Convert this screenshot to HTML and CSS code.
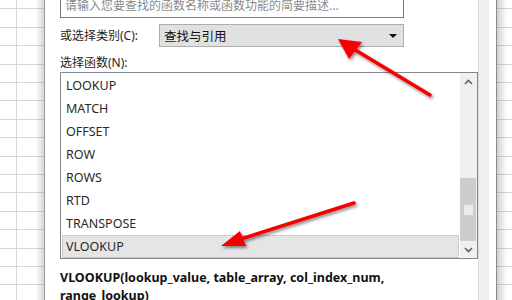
FILE: index.html
```html
<!DOCTYPE html>
<html lang="zh-CN">
<head>
  <meta charset="UTF-8" />
  <title>插入函数</title>
  <link rel="stylesheet" href="styles.css">
</head>
<body>
  <div class="screen">
    <div class="sheet sheet-left"></div>

    <div class="dialog">
      <div class="content">
        <div class="search">请输入您要查找的函数名称或函数功能的简要描述...</div>

        <div class="cat-row">
          <label>或选择类别(C):</label>
          <div class="select">
            <span>查找与引用</span>
            <span class="caret"></span>
          </div>
        </div>

        <div class="list-label">选择函数(N):</div>

        <div class="listbox">
          <ul class="items">
            <li>LOOKUP</li>
            <li>MATCH</li>
            <li>OFFSET</li>
            <li>ROW</li>
            <li>ROWS</li>
            <li>RTD</li>
            <li>TRANSPOSE</li>
            <li class="selected">VLOOKUP</li>
          </ul>
          <div class="scrollbar">
            <div class="sb-btn">
              <svg width="9" height="6" viewBox="0 0 9 6"><path d="M1 5 L4.5 1.5 L8 5" fill="none" stroke="#606060" stroke-width="1.6"/></svg>
            </div>
            <div class="sb-track">
              <div class="sb-thumb"><span class="grip"></span></div>
            </div>
            <div class="sb-btn">
              <svg width="9" height="6" viewBox="0 0 9 6"><path d="M1 1 L4.5 4.5 L8 1" fill="none" stroke="#606060" stroke-width="1.6"/></svg>
            </div>
          </div>
        </div>

        <p class="syntax">VLOOKUP(lookup_value, table_array, col_index_num,<br>range_lookup)</p>
      </div>
      <div class="frame"></div>
    </div>

    <div class="sheet sheet-right"></div>

    <svg class="arrows" width="512" height="300" viewBox="0 0 512 300">
      <defs>
        <filter id="shade" x="-20%" y="-20%" width="140%" height="140%">
          <feDropShadow dx="1.5" dy="2" stdDeviation="1.6" flood-color="#000" flood-opacity="0.45"/>
        </filter>
      </defs>
      <g filter="url(#shade)" fill="#f40000" stroke="#f40000">
        <line x1="430" y1="95" x2="352" y2="48" stroke-width="3.5" stroke-linecap="round"/>
        <polygon points="338,39 362,42 349,59" stroke="none"/>
        <line x1="354" y1="203" x2="238" y2="240" stroke-width="3.5" stroke-linecap="round"/>
        <polygon points="221,246 240,231 246,246" stroke="none"/>
      </g>
    </svg>
  </div>
</body>
</html>
```

FILE: styles.css
```css
* { box-sizing: border-box; }
body {
  margin: 0;
  background: #fff;
  font-family: "Noto Sans", "Noto Sans CJK SC", sans-serif;
  color: #1e1e1e;
}
.screen {
  position: relative;
  display: flex;
  width: 512px;
  height: 300px;
  overflow: hidden;
}
.sheet {
  height: 300px;
  background-color: #fff;
}
.sheet-left {
  width: 44px;
  background-image:
    linear-gradient(to right, rgba(0,0,0,0) 36px, rgba(0,0,0,0.16) 44px),
    linear-gradient(to right, transparent 16px, #d6d6d6 16px, #d6d6d6 17px, transparent 17px),
    repeating-linear-gradient(to bottom, transparent 0, transparent 8.4px, #d6d6d6 8.4px, #d6d6d6 9.4px, transparent 9.4px, transparent 18.4px);
}
.sheet-right {
  width: 16px;
  border-left: 1px solid #8a8a8a;
  background-image:
    linear-gradient(to right, rgba(0,0,0,0.18) 0, rgba(0,0,0,0) 10px),
    repeating-linear-gradient(to bottom, transparent 0, transparent 8.4px, #d6d6d6 8.4px, #d6d6d6 9.4px, transparent 9.4px, transparent 18.4px);
}
.dialog {
  width: 452px;
  display: flex;
  border-left: 1px solid #9a9a9a;
  background: #fff;
}
.content {
  width: 433px;
  padding-left: 15px;
  font-size: 12px;
}
.frame {
  width: 11px;
  border-left: 1px solid #dcdcdc;
  background: #f0f0f0;
}
.search {
  width: 344px;
  height: 24px;
  margin-top: -6px;
  padding: 3px 0 0 4px;
  border: 1px solid #7a7a7a;
  color: #8a8a8a;
  line-height: 16px;
  white-space: nowrap;
}
.cat-row {
  display: flex;
  align-items: center;
  margin-top: 6px;
  height: 23px;
}
.cat-row label {
  width: 99px;
  line-height: 16px;
}
.select {
  width: 245px;
  height: 23px;
  display: flex;
  align-items: center;
  justify-content: space-between;
  padding: 0 6px 0 4px;
  background: #e1e1e1;
  border: 1px solid #adadad;
  font-size: 12.5px;
  color: #111;
}
.caret {
  width: 0;
  height: 0;
  border-left: 4px solid transparent;
  border-right: 4px solid transparent;
  border-top: 4px solid #111;
}
.list-label {
  margin-top: 8px;
  line-height: 16px;
}
.listbox {
  display: flex;
  width: 418px;
  height: 187px;
  margin-top: 1px;
  border: 1px solid #828790;
}
.items {
  flex: 1;
  list-style: none;
  margin: 0;
  padding: 1px 1px 0;
  font-size: 12.5px;
}
.items li {
  height: 23px;
  line-height: 21px;
  padding-left: 3px;
  color: #2a2a2a;
  border: 1px solid transparent;
}
.items li.selected {
  background: #e5e5e5;
  border: 1px dotted #b4b4b4;
}
.scrollbar {
  width: 17px;
  display: flex;
  flex-direction: column;
  background: #f0f0f0;
}
.sb-btn {
  height: 17px;
  display: flex;
  align-items: center;
  justify-content: center;
}
.sb-track {
  flex: 1;
  display: flex;
  flex-direction: column;
  justify-content: flex-end;
  padding: 0 1px 0 0;
}
.sb-thumb {
  height: 63px;
  background: #cdcdcd;
  display: flex;
  align-items: center;
  justify-content: center;
}
.grip {
  width: 9px;
  height: 10px;
  background: #ebebeb;
}
.syntax {
  margin: 10px 0 0;
  font-size: 12.5px;
  font-weight: 700;
  line-height: 18px;
  color: #111;
  white-space: nowrap;
}
.arrows {
  position: absolute;
  left: 0;
  top: 0;
  pointer-events: none;
}
```
